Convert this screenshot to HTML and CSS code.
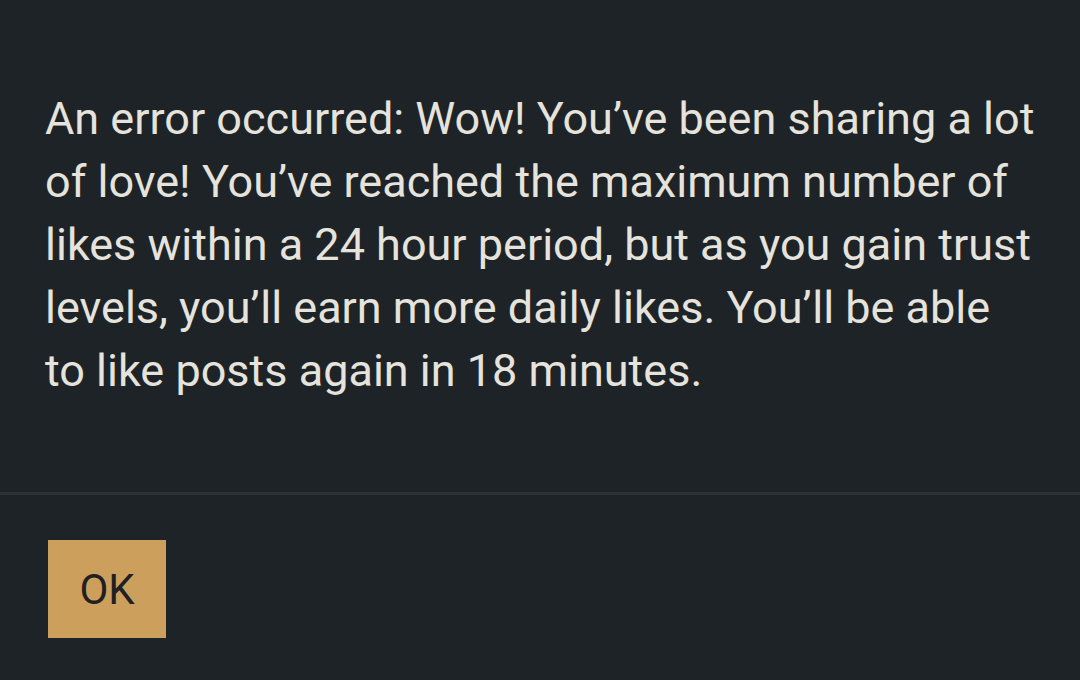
FILE: index.html
```html
<!DOCTYPE html>
<html>
<head>
<meta charset="utf-8">
<link rel="stylesheet" href="styles.css">
</head>
<body>
<div class="dialog">
  <div class="body">
    <p class="message">An error occurred: Wow! You’ve been sharing a lot of love! You’ve reached the maximum number of likes within a 24 hour period, but as you gain trust levels, you’ll earn more daily likes. You’ll be able to like posts again in 18 minutes.</p>
  </div>
  <div class="footer">
    <button class="ok">OK</button>
  </div>
</div>
</body>
</html>
```
FILE: styles.css
```css
html, body {
  margin: 0;
  padding: 0;
  background: #1e2328;
  height: 100%;
}
body {
  font-family: Roboto, "Liberation Sans", sans-serif;
  color: #e5e3dc;
}
.dialog {
  display: flex;
  flex-direction: column;
  height: 680px;
}
.body {
  padding: 87px 44px 90px 45px;
  border-bottom: 3px solid #2c3137;
}
.message {
  margin: 0;
  font-size: 45px;
  line-height: 63px;
}
.footer {
  padding: 45px 48px 0 48px;
}
.ok {
  display: block;
  width: 118px;
  height: 98px;
  border: none;
  background: #cc9f5c;
  color: #1f2023;
  font-family: Roboto, "Liberation Sans", sans-serif;
  font-size: 42px;
  padding: 0;
  border-radius: 0;
}
```
